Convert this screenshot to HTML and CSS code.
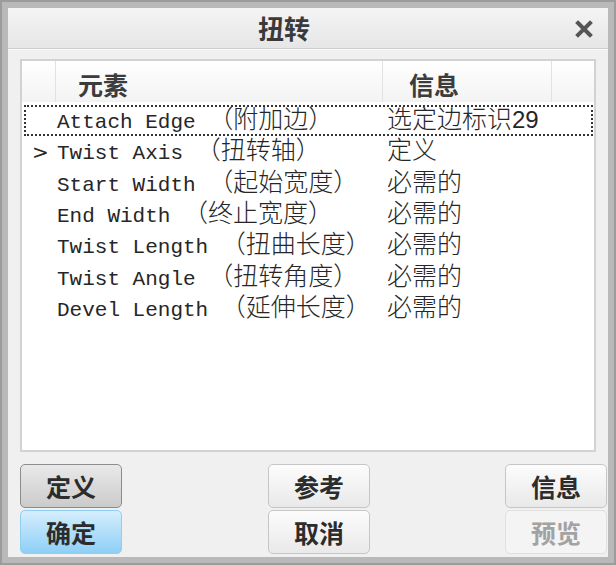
FILE: index.html
```html
<!DOCTYPE html>
<html lang="zh-CN">
<head>
    <meta charset="UTF-8">
    <title>扭转</title>
    <link rel="stylesheet" href="styles.css">
</head>
<body>

<div class="window">
    <!-- Title bar -->
    <div class="titlebar">
        <span class="title">扭转</span>
        <span class="close">
            <svg width="18" height="18" viewBox="0 0 18 18">
                <path d="M3 3 L15 15 M15 3 L3 15" stroke="#555" stroke-width="4" stroke-linecap="square"/>
            </svg>
        </span>
    </div>

    <div class="body">
        <!-- Element list -->
        <div class="list">
            <div class="list-head">
                <div class="hcell gutter"></div>
                <div class="hcell name">元素</div>
                <div class="hcell info">信息</div>
                <div class="hcell filler"></div>
            </div>
            <div class="rows">
                <div class="row focus">
                    <span class="mark"></span>
                    <span class="name">Attach Edge <span class="cn">（附加边）</span></span>
                    <span class="info"><span class="cn">选定边标识</span><span class="num">29</span></span>
                </div>
                <div class="row">
                    <span class="mark">&gt;</span>
                    <span class="name">Twist Axis <span class="cn">（扭转轴）</span></span>
                    <span class="info"><span class="cn">定义</span></span>
                </div>
                <div class="row">
                    <span class="mark"></span>
                    <span class="name">Start Width <span class="cn">（起始宽度）</span></span>
                    <span class="info"><span class="cn">必需的</span></span>
                </div>
                <div class="row">
                    <span class="mark"></span>
                    <span class="name">End Width <span class="cn">（终止宽度）</span></span>
                    <span class="info"><span class="cn">必需的</span></span>
                </div>
                <div class="row">
                    <span class="mark"></span>
                    <span class="name">Twist Length <span class="cn">（扭曲长度）</span></span>
                    <span class="info"><span class="cn">必需的</span></span>
                </div>
                <div class="row">
                    <span class="mark"></span>
                    <span class="name">Twist Angle <span class="cn">（扭转角度）</span></span>
                    <span class="info"><span class="cn">必需的</span></span>
                </div>
                <div class="row">
                    <span class="mark"></span>
                    <span class="name">Devel Length <span class="cn">（延伸长度）</span></span>
                    <span class="info"><span class="cn">必需的</span></span>
                </div>
            </div>
        </div>

        <!-- Dialog buttons -->
        <div class="buttons">
            <div class="btn-col">
                <button class="btn pressed">定义</button>
                <button class="btn default">确定</button>
            </div>
            <div class="btn-col">
                <button class="btn">参考</button>
                <button class="btn">取消</button>
            </div>
            <div class="btn-col">
                <button class="btn">信息</button>
                <button class="btn disabled">预览</button>
            </div>
        </div>
    </div>
</div>

</body>
</html>
```

FILE: styles.css
```css
/* Page */
body {
    margin: 0;
    padding: 0;
    background-color: #a8a8a8;
    font-family: "Noto Sans CJK SC", sans-serif;
    color: #2a2a2a;
}

/* Dialog frame */
.window {
    box-sizing: border-box;
    width: 616px;
    height: 565px;
    border: 8px solid #b9b9b9;
    outline: 2px solid #9c9c9c;
    outline-offset: -2px;
    background-color: #f0f0f0;
    display: flex;
    flex-direction: column;
}

/* Title bar */
.titlebar {
    height: 40px;
    display: flex;
    align-items: center;
    background: linear-gradient(#f4f4f4, #e6e6e6);
    border-bottom: 1px solid #cdcdcd;
    box-shadow: 0 1px 0 #fafafa;
    position: relative;
}

.title {
    flex: 1;
    text-align: center;
    padding-right: 48px;
    font-size: 26px;
    line-height: 1;
    font-weight: bold;
    color: #3a3a3a;
}

.close {
    position: absolute;
    right: 15px;
    top: 11px;
    width: 18px;
    height: 18px;
}

/* Content area */
.body {
    flex: 1;
    display: flex;
    flex-direction: column;
    padding: 10px 12px 0 12px;
}

/* List box */
.list {
    height: 389px;
    background-color: #fff;
    border: 2px solid #d2d2d2;
    display: flex;
    flex-direction: column;
}

.list-head {
    height: 41px;
    display: flex;
    background: linear-gradient(#ffffff, #f3f3f3);
}

.hcell {
    border-right: 1px solid #e2e2e2;
    font-size: 25px;
    font-weight: bold;
    color: #3c3c3c;
    line-height: 46px;
}

.hcell.gutter {
    width: 33px;
}

.hcell.name {
    width: 304px;
    padding-left: 22px;
}

.hcell.info {
    width: 142px;
    padding-left: 26px;
}

.hcell.filler {
    flex: 1;
    border-right: none;
}

.rows {
    padding-top: 3px;
}

.row {
    height: 31.3px;
    display: flex;
    align-items: center;
    margin: 0 1px 0 2px;
    font-family: "Liberation Mono", "Noto Sans CJK SC", monospace;
    font-size: 21px;
    line-height: 26px;
    white-space: pre;
    color: #262626;
}

.row.focus {
    outline: 2px dotted #333;
    outline-offset: -2px;
}

.row .mark {
    width: 33px;
    padding-left: 8px;
    box-sizing: border-box;
    font-family: "DejaVu Sans", sans-serif;
    font-size: 20px;
}

.row .name {
    width: 328px;
}

.row .info {
    padding-left: 2px;
}

.cn {
    font-family: "Noto Sans CJK SC", sans-serif;
    font-size: 25px;
    line-height: 1;
    font-weight: 300;
}

.num {
    font-family: "Liberation Sans", sans-serif;
    font-size: 24px;
    line-height: 1;
}

/* Buttons */
.buttons {
    margin-top: 12px;
    margin-right: -10px;
    display: grid;
    grid-template-columns: 248px 237px 101px;
}

.btn-col {
    display: flex;
    flex-direction: column;
    gap: 2px;
}

.btn {
    width: 102px;
    height: 44px;
    padding: 0;
    border: 1px solid #c6c6c6;
    border-radius: 5px;
    background: linear-gradient(#fcfcfc, #e9e9e9);
    font-family: "Noto Sans CJK SC", sans-serif;
    font-size: 25px;
    font-weight: bold;
    color: #2c2c2c;
}

.btn.pressed {
    border-color: #8c8c8c;
    background: linear-gradient(#e9e9e9, #cbcbcb);
}

.btn.default {
    border-color: #92cdf2;
    background: linear-gradient(#d5eefd, #8fcff6);
}

.btn.disabled {
    border-color: #e0e0e0;
    background: #f4f4f4;
    color: #a2a2a2;
}
```
